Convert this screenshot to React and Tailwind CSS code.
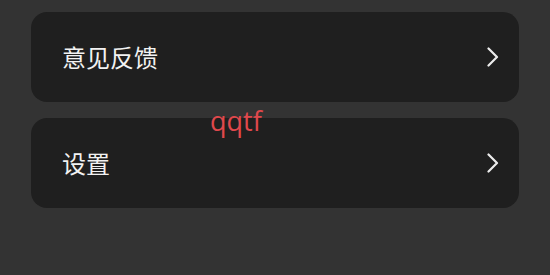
import React from "react";

function Chevron() {
  return (
    <svg width="14" height="20" viewBox="0 0 14 20" fill="none" className="shrink-0">
      <path d="M2.5 1.5 L11 10 L2.5 18.5" stroke="#ececec" strokeWidth="2.2" strokeLinecap="round" strokeLinejoin="round" />
    </svg>
  );
}

function Row({ label }) {
  return (
    <div className="flex items-center justify-between h-[90px] rounded-[16px] bg-[#1f1f1f] pl-[31px] pr-[19px]">
      <span className="text-[24px] text-[#f2f2f2] leading-none">{label}</span>
      <Chevron />
    </div>
  );
}

export default function App() {
  return (
    <div
      className="relative w-[550px] h-[275px] bg-[#333333] overflow-hidden"
      style={{ fontFamily: '"Noto Sans CJK SC", "Noto Sans", sans-serif' }}
    >
      <div className="flex flex-col gap-[16px] pt-[12px] pl-[31px] pr-[31px]">
        <Row label="意见反馈" />
        <Row label="设置" />
      </div>
      <div
        className="absolute left-[210px] top-[107px] text-[27px] leading-none text-[#e0484c]"
        style={{ fontFamily: '"Open Sans", "Noto Sans", sans-serif' }}
      >
        qqtf
      </div>
    </div>
  );
}
